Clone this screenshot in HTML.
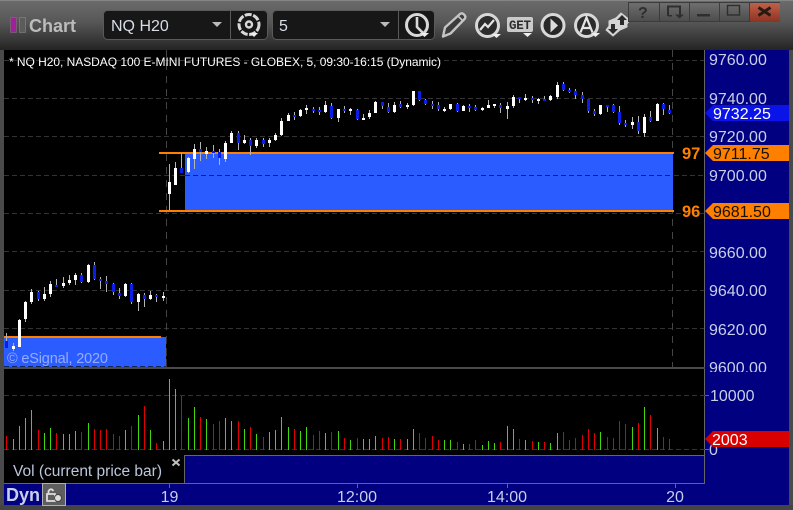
<!DOCTYPE html>
<html><head><meta charset="utf-8"><style>
html,body{margin:0;padding:0;background:#000;overflow:hidden}
svg{display:block}
text{font-family:"Liberation Sans",sans-serif}
</style></head><body>
<svg width="793" height="510" viewBox="0 0 793 510" xmlns="http://www.w3.org/2000/svg">
<defs>
<linearGradient id="t" x1="0" y1="0" x2="0" y2="1"><stop offset="0" stop-color="#6c6c6c"/><stop offset=".45" stop-color="#565656"/><stop offset="1" stop-color="#242424"/></linearGradient>
<linearGradient id="b" x1="0" y1="0" x2="0" y2="1"><stop offset="0" stop-color="#707070"/><stop offset="1" stop-color="#4c4c4c"/></linearGradient>
<linearGradient id="x" x1="0" y1="0" x2="0" y2="1"><stop offset="0" stop-color="#c0604a"/><stop offset="1" stop-color="#8c3322"/></linearGradient>
</defs>
<rect width="793" height="510" fill="#404040"/>
<rect y="0" width="793" height="50" fill="url(#t)"/>
<rect y="0" width="793" height="1" fill="#858585"/>
<rect x="0" y="50" width="4" height="460" fill="#4a4a4a"/>
<rect x="789" y="50" width="4" height="460" fill="#4a4a4a"/>
<rect y="505" width="793" height="5" fill="#444"/>

<!-- logo -->
<rect x="10.500" y="17.500" width="6" height="15" fill="#a0209a" stroke="#777" stroke-width=".6"/>
<rect x="19.500" y="17.500" width="6" height="15" fill="#5c5c5c" stroke="#888" stroke-width=".6"/>
<text x="29" y="32" font-size="18" font-weight="700" fill="#bcbcbc">Chart</text>

<!-- combos -->
<rect x="103.500" y="10.500" width="164" height="29" rx="4" fill="#171717" stroke="#5a5a5a"/>
<path d="M230.500 11V39" stroke="#5a5a5a"/>
<text x="111" y="31" font-size="16" fill="#d8dde8">NQ H20</text>
<path d="M212 22h10l-5 5z" fill="#bbb"/>
<g fill="none" stroke="#d8d8d8">
<circle cx="249" cy="24.500" r="10" stroke-width="3" stroke-dasharray="7 1.500"/>
<circle cx="249" cy="24.500" r="3" stroke-width="2.400"/>
</g>
<path d="M250 33h8l-4 4z" fill="#eee"/>
<rect x="272.500" y="10.500" width="162" height="29" rx="4" fill="#171717" stroke="#5a5a5a"/>
<path d="M398.500 11V39" stroke="#5a5a5a"/>
<text x="279" y="31" font-size="16" fill="#d8dde8">5</text>
<path d="M380 22h10l-5 5z" fill="#bbb"/>
<!-- clock -->
<circle cx="417" cy="25" r="10.500" fill="#171717" stroke="#d8d8d8" stroke-width="3"/>
<path d="M417 17V27L423 33" fill="none" stroke="#d8d8d8" stroke-width="2.600"/>
<path d="M420 33h9l-4.500 4z" fill="#eee"/>
<!-- pencil -->
<path d="M443 36.500l2-9L460 14q2-1.500 4 .5t1 4L450.500 33.500z" fill="#3c3c3c" stroke="#c4c4c4" stroke-width="2.400" stroke-linejoin="round"/>
<path d="M458 16l5 5" stroke="#c4c4c4" stroke-width="1.600"/>
<!-- chart circle -->
<circle cx="487.500" cy="25.500" r="11" fill="#2c2c2c" stroke="#d8d8d8" stroke-width="3"/>
<path d="M480 30l5-6 3 3 6-7" fill="none" stroke="#e4e4e4" stroke-width="2.200"/>
<path d="M492 34h9l-4.500 4z" fill="#eee"/>
<!-- GET -->
<rect x="507" y="17" width="26" height="15" rx="2" fill="#cacaca"/>
<text x="509" y="29" font-size="12.500" font-weight="700" fill="#2c2c2c" style="font-family:'Liberation Mono',monospace" textLength="22">GET</text>
<path d="M523 33h9l-4.500 4z" fill="#eee"/>
<!-- play -->
<circle cx="553" cy="25.500" r="11" fill="#282828" stroke="#d8d8d8" stroke-width="3"/>
<path d="M550.500 18.500l7.500 7-7.500 7z" fill="#dcdcdc"/>
<!-- A -->
<circle cx="586.500" cy="25.500" r="11" fill="#2c2c2c" stroke="#d8d8d8" stroke-width="3"/>
<path d="M580.500 32.500L586.500 17.500l6 15M582.500 28h8" fill="none" stroke="#e4e4e4" stroke-width="2.200"/>
<path d="M591 33h9l-4.500 4z" fill="#eee"/>
<!-- arrows -->
<path d="M621 13L630 20 627 24V27L620 30 613 36 606 30 609 26V21L616 18Z" fill="#d4d4d4" stroke="#d4d4d4" stroke-linejoin="round"/>
<path d="M622 15l5 5h-3v5h-4v-5h-3zM613 34l-5-5h3v-5h4v5h3z" fill="#2a2a2a"/>

<!-- window buttons -->
<path d="M629 2h130v19.500h-130z" fill="url(#b)"/>
<path d="M629 2.500h151M628.500 2v20M659.500 3v18M689.500 3v18M719.500 3v18M749.500 3v18" stroke="#3c3c3c" fill="none"/>
<path d="M629 21.500h150" stroke="#3c3c3c"/>
<rect x="750" y="3" width="30" height="19" rx="2" fill="url(#x)"/>
<text x="638" y="18" font-size="16" font-weight="700" fill="#2e2e2e">?</text>
<path d="M668 16V6.500h12v8" fill="none" stroke="#2e2e2e" stroke-width="2"/>
<path d="M675 14.500h9l-4.500 4zM668 15h4v1.500h-4z" fill="#2e2e2e"/>
<rect x="697" y="14" width="13" height="2.500" fill="#2e2e2e"/>
<rect x="727.500" y="5.500" width="12" height="9.500" fill="none" stroke="#2e2e2e" stroke-width="1.400"/>
<path d="M758.500 7.500l12 8M770.500 7.500l-12 8" stroke="#2a1a14" stroke-width="3"/>

<!-- chart background -->
<rect x="4" y="50" width="701" height="434" fill="#000"/>
<!-- price axis -->
<rect x="705" y="50" width="84" height="455" fill="#000080"/>
<rect x="4" y="484" width="701" height="21" fill="#000080"/>
<rect x="185" y="456" width="520" height="28" fill="#000080"/>

<!-- grid -->
<path d="M4 60.500H705M4 98.500H705M4 136.500H705M4 213.500H705M4 251.500H705M4 290.500H705M4 328.500H705" stroke="#333" stroke-dasharray="5 3"/>
<path d="M4 175.500H185M674 175.500H705" stroke="#333" stroke-dasharray="5 3"/>
<path d="M166.500 50V367M672.500 50V367" stroke="#444" stroke-dasharray="7 6"/>

<!-- level zones -->
<rect x="185" y="153" width="488" height="57" fill="#2a5cff"/>
<path d="M185 175.500H673" stroke="#10245c" stroke-dasharray="5 3"/>
<rect x="159" y="152" width="515" height="2" fill="#ff8000"/>
<rect x="159" y="210" width="515" height="2" fill="#ff8000"/>
<rect x="4" y="337" width="162" height="30" fill="#2a5cff"/>
<rect x="4" y="336" width="157" height="2" fill="#ff8000"/>
<path d="M4 366.500H166" stroke="#10245c" stroke-dasharray="5 3"/>
<path d="M166.500 337V367" stroke="#333" stroke-dasharray="7 4"/>
<text x="7" y="363" font-size="14.500" fill="#94acff" textLength="101">© eSignal, 2020</text>

<!-- candle wicks -->
<path fill="none" stroke="#b4b4b4" d="M6.500 333V348M13.500 343V351M19.500 319V347M25.500 301V322M31.500 289V304M38.500 291V301M44.500 287V301M50.500 281V297M56.500 279V287M63.500 277V288M69.500 275V285M75.500 273V285M81.500 273V283M88.500 264V283M94.500 262V280M100.500 277V289M106.500 276V292M113.500 283V295M119.500 288V299M125.500 283V297M131.500 283V304M138.500 293V311M144.500 293V307M150.500 291V300M156.500 294V302M163.500 292V301M169.500 164V210M175.500 162V185M181.500 153V173M188.500 157V173M194.500 144V169M200.500 142V161M206.500 147V159M213.500 145V158M219.500 149V165M225.500 141V162M231.500 131V143M238.500 131V150M244.500 135V144M250.500 138V155M256.500 138V148M263.500 138V147M269.500 138V147M275.500 133V141M281.500 118V136M288.500 113V121M294.500 112V120M300.500 109V117M306.500 105V114M313.500 107V113M319.500 107V115M325.500 101V113M331.500 103V119M338.500 109V122M344.500 106V113M350.500 108V115M357.500 109V120M363.500 114V120M369.500 110V119M375.500 101V113M382.500 102V109M388.500 103V113M394.500 102V113M400.500 101V108M407.500 103V109M413.500 91V106M419.500 91V101M425.500 99V105M432.500 101V109M438.500 102V111M444.500 107V112M450.500 104V110M457.500 103V112M463.500 105V111M469.500 104V112M475.500 105V111M482.500 107V111M488.500 100V108M494.500 104V108M500.500 103V113M507.500 102V119M513.500 95V108M519.500 97V103M525.500 94V101M532.500 96V103M538.500 98V104M544.500 96V101M550.500 95V101M557.500 82V99M563.500 82V91M569.500 88V93M575.500 89V99M582.500 92V103M588.500 99V113M594.500 109V116M600.500 105V115M607.500 105V112M613.500 104V113M619.500 106V125M625.500 120V127M632.500 117V129M638.500 116V134M644.500 114V137M650.500 111V122M657.500 103V121M663.500 103V115M669.500 105V114"/>
<!-- blue bodies -->
<path fill="none" stroke="#0a1ee6" stroke-width="3" d="M6.500 341V348M38.500 292V299M56.500 285V287M81.500 275V282M94.500 265V279M100.500 279V281M106.500 281V284M113.500 284V292M119.500 293V296M131.500 284V302M144.500 295V299M156.500 295V297M181.500 168V173M200.500 149V152M213.500 151V153M219.500 152V158M238.500 133V143M250.500 140V146M263.500 140V144M294.500 115V117M313.500 109V111M319.500 110V112M331.500 106V118M344.500 109V111M357.500 110V119M382.500 102V106M388.500 107V112M400.500 104V107M419.500 91V100M425.500 100V104M432.500 104V106M438.500 105V109M457.500 104V111M469.500 106V108M475.500 107V110M500.500 105V108M519.500 97V99M532.500 98V100M544.500 99V101M563.500 84V90M569.500 90V92M575.500 91V95M582.500 95V99M588.500 99V111M594.500 111V114M607.500 105V107M613.500 105V112M619.500 112V123M625.500 123V125M638.500 122V131M650.500 117V121M663.500 104V109M669.500 110V113"/>
<!-- white bodies -->
<path fill="none" stroke="#fff" stroke-width="3" d="M13.500 346V349M19.500 320V347M25.500 302V319M31.500 292V302M44.500 294V299M50.500 284V294M63.500 283V286M69.500 280V283M75.500 275V280M88.500 265V282M125.500 284V296M138.500 294V302M150.500 295V299M163.500 296V298M169.500 182V194M175.500 168V185M188.500 158V172M194.500 149V159M206.500 151V154M225.500 143V159M231.500 133V143M244.500 140V143M256.500 140V146M269.500 140V143M275.500 135V140M281.500 121V135M288.500 115V121M300.500 110V116M306.500 108V110M325.500 105V112M338.500 109V118M350.500 109V111M363.500 118V120M369.500 113V117M375.500 102V113M394.500 105V112M407.500 105V107M413.500 91V105M444.500 109V111M450.500 104V109M463.500 106V111M482.500 108V110M488.500 105V108M494.500 104V106M507.500 106V109M513.500 97V106M525.500 98V100M538.500 99V101M550.500 96V100M557.500 85V97M600.500 105V114M632.500 122V125M644.500 117V133M657.500 104V121"/>

<!-- top legend -->
<text x="9" y="66" font-size="12" fill="#fff" textLength="432">* NQ H20, NASDAQ 100 E-MINI FUTURES - GLOBEX, 5, 09:30-16:15 (Dynamic)</text>

<!-- level labels -->
<text x="682" y="159" font-size="16.500" font-weight="700" fill="#ff8000">97</text>
<text x="682" y="217" font-size="16.500" font-weight="700" fill="#ff8000">96</text>

<!-- axis -->
<path d="M704.500 50V484" stroke="#666"/>
<g font-size="16" fill="#c8cfe8">
<text x="709" y="65">9760.00</text>
<text x="709" y="104">9740.00</text>
<text x="709" y="142">9720.00</text>
<text x="709" y="181">9700.00</text>
<text x="709" y="258">9660.00</text>
<text x="709" y="296">9640.00</text>
<text x="709" y="335">9620.00</text>
<text x="709" y="373">9600.00</text>
</g>
<rect x="705" y="372" width="84" height="8" fill="#000080"/>
<path d="M705 113l8-8h76v16h-76z" fill="#0a14e8"/>
<text x="713" y="119" font-size="16" fill="#fff">9732.25</text>
<path d="M705 153l8-8h76v16h-76z" fill="#ff8000"/>
<text x="713" y="159" font-size="16" fill="#1a1000">9711.75</text>
<path d="M705 211l8-8h76v16h-76z" fill="#ff8000"/>
<text x="713" y="217" font-size="16" fill="#1a1000">9681.50</text>

<!-- divider -->
<rect x="4" y="367" width="701" height="2" fill="#4a4a4a"/>

<!-- volume -->
<path d="M4 395.500H705M4 449.500H705" stroke="#333" stroke-dasharray="5 3"/>
<path fill="none" stroke="#3fd80a" d="M13.500 439V450M19.500 426V450M25.500 418V450M31.500 410V450M44.500 433V450M50.500 428V450M63.500 434V450M69.500 434V450M75.500 431V450M88.500 423V450M125.500 430V450M138.500 415V450M150.500 430V450M163.500 441V450M169.500 379V450M175.500 389V450M188.500 418V450M194.500 407V450M206.500 419V450M225.500 418V450M231.500 421V450M244.500 429V450M256.500 434V450M269.500 432V450M275.500 430V450M281.500 417V450M288.500 427V450M300.500 431V450M306.500 427V450M325.500 433V450M338.500 431V450M350.500 440V450M363.500 439V450M369.500 439V450M375.500 436V450M394.500 439V450M407.500 439V450M413.500 429V450M444.500 440V450M450.500 440V450M463.500 444V450M482.500 445V450M488.500 441V450M494.500 443V450M507.500 426V450M513.500 429V450M525.500 440V450M538.500 442V450M550.500 443V450M557.500 433V450M600.500 432V450M632.500 427V450M644.500 407V450M657.500 428V450"/>
<path fill="none" stroke="#e00000" d="M6.500 436V450M38.500 430V450M56.500 433V450M81.500 432V450M94.500 429V450M100.500 430V450M106.500 429V450M113.500 434V450M119.500 436V450M131.500 426V450M144.500 406V450M156.500 443V450M181.500 396V450M200.500 417V450M213.500 424V450M219.500 421V450M238.500 421V450M250.500 427V450M263.500 437V450M294.500 429V450M313.500 435V450M319.500 431V450M331.500 432V450M344.500 438V450M357.500 438V450M382.500 438V450M388.500 437V450M400.500 439V450M419.500 433V450M425.500 438V450M432.500 436V450M438.500 440V450M457.500 442V450M469.500 444V450M475.500 440V450M500.500 442V450M519.500 439V450M532.500 441V450M544.500 442V450M563.500 432V450M569.500 440V450M575.500 438V450M582.500 435V450M588.500 429V450M594.500 433V450M607.500 437V450M613.500 438V450M619.500 421V450M625.500 424V450M638.500 423V450M650.500 415V450M663.500 437V450M669.500 439V450"/>
<path d="M705 395.500H709M705 449.500H709" stroke="#666"/>
<text x="710" y="401" font-size="16" fill="#c8cfe8">10000</text>
<text x="709" y="455" font-size="16" fill="#c8cfe8">0</text>
<path d="M705 439l8-8h76v16h-76z" fill="#d80000"/>
<text x="712" y="445" font-size="16" fill="#fff">2003</text>

<!-- legend row -->
<path d="M184 455.500H704M184.500 455V484M4 483.500H704" stroke="#666"/>
<text x="13" y="476" font-size="15.500" fill="#bcc6dc" textLength="149">Vol (current price bar)</text>
<path d="M172.500 459.500l7 6M179.500 459.500l-7 6" stroke="#c0c0c0" stroke-width="2"/>

<!-- bottom axis -->
<path d="M169.500 484V488M357.500 484V488M507.500 484V488M675.500 484V488" stroke="#666"/>
<text x="6" y="501" font-size="18" font-weight="700" fill="#c8cfe8">Dyn</text>
<rect x="42.500" y="483.500" width="23" height="22" fill="#5e5e5e" stroke="#b0b0b0"/>
<path d="M47 501v-7h8v7zM48.500 494v-3q2.500-3.500 5 0" fill="none" stroke="#ddd" stroke-width="1.800"/>
<circle cx="58" cy="498" r="3.500" fill="#ddd" stroke="#444"/>
<g font-size="16" fill="#c8cfe8" text-anchor="middle">
<text x="169.500" y="502">19</text>
<text x="357" y="502">12:00</text>
<text x="507" y="502">14:00</text>
<text x="675" y="502">20</text>
</g>
</svg>
</body></html>
